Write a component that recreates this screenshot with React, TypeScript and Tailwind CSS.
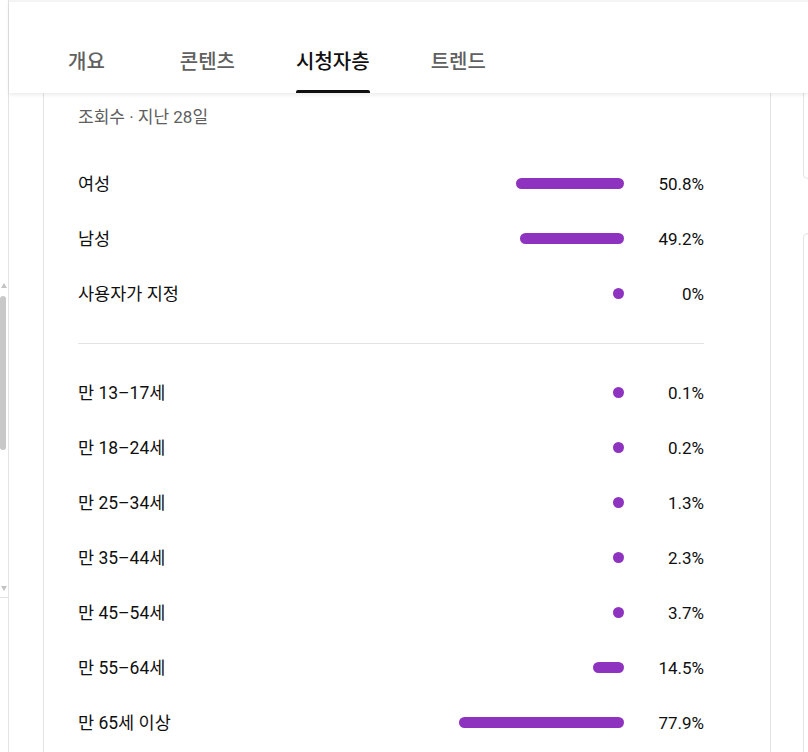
const tabs = [
  { label: '개요', gap: 'mr-[75px]', active: false },
  { label: '콘텐츠', gap: 'mr-[61px]', active: false },
  { label: '시청자층', gap: 'mr-[61px]', active: true },
  { label: '트렌드', gap: '', active: false },
];

const gender = [
  { label: '여성', pct: 50.8 },
  { label: '남성', pct: 49.2 },
  { label: '사용자가 지정', pct: 0 },
];

const ages = [
  { label: '만 13–17세', pct: 0.1 },
  { label: '만 18–24세', pct: 0.2 },
  { label: '만 25–34세', pct: 1.3 },
  { label: '만 35–44세', pct: 2.3 },
  { label: '만 45–54세', pct: 3.7 },
  { label: '만 55–64세', pct: 14.5 },
  { label: '만 65세 이상', pct: 77.9 },
];

const font = { fontFamily: 'Roboto, "Noto Sans CJK KR", sans-serif' };

function Row({ label, pct }: { label: string; pct: number }) {
  // bar grows from the right edge, never smaller than a dot
  const w = Math.max(11, pct * 2.12);
  return (
    <div className="h-[55px] flex items-center">
      <div className="flex-1 text-[17.5px] leading-[24px] text-[#0f0f0f]">{label}</div>
      <div className="h-[11px] rounded-full bg-[#8e33bf]" style={{ width: w }} />
      <div className="w-[80px] text-right text-[17px] leading-[24px] text-[#0f0f0f]">{pct === 0 ? '0' : pct.toFixed(1)}%</div>
    </div>
  );
}

export default function App() {
  return (
    <div className="w-[808px] h-[752px] overflow-hidden bg-white flex" style={font}>
      {/* left scrollbar strip */}
      <div className="w-[9px] shrink-0 border-r border-[#e3e3e3] flex flex-col">
        <div className="h-[283px]" />
        <div className="w-0 h-0 border-l-[3px] border-r-[3px] border-b-[5px] border-l-transparent border-r-transparent border-b-[#c4c4c4] ml-[1px]" />
        <div className="h-[8px]" />
        <div className="w-[6px] h-[154px] rounded-[3px] bg-[#c8c8c8]" />
        <div className="h-[136px]" />
        <div className="w-0 h-0 border-l-[3px] border-r-[3px] border-t-[5px] border-l-transparent border-r-transparent border-t-[#c4c4c4] ml-[1px]" />
        <div className="h-[7px] border-b border-[#e3e3e3]" />
      </div>

      <div className="flex-1 flex flex-col min-w-0">
        {/* tabs header */}
        <div className="h-[93px] shrink-0 bg-white border-t-[2px] border-[#f4f4f4] shadow-[0_2px_4px_rgba(0,0,0,0.08)] relative z-10 flex items-end pl-[59px]">
          {tabs.map(t => (
            <div key={t.label} className={`${t.gap} flex flex-col items-stretch`}>
              <div
                className={`text-[20px] font-medium leading-[26px] pb-[15px] ${t.active ? 'text-[#0f0f0f]' : 'text-[#606060]'}`}
              >
                {t.label}
              </div>
              <div className={`h-[3px] rounded-t-[2px] ${t.active ? 'bg-[#0f0f0f]' : 'bg-transparent'}`} />
            </div>
          ))}
        </div>

        <div className="flex-1 flex min-h-0">
          {/* audience card */}
          <div className="ml-[34px] w-[728px] shrink-0 border-x border-[#e3e3e3] pl-[34px] pr-[66px]">
            <div className="h-[63px] pt-[12px] text-[17px] leading-[24px] text-[#606060]">조회수 · 지난 28일</div>
            {gender.map(r => (
              <Row key={r.label} {...r} />
            ))}
            <div className="mt-[22px] mb-[21px] border-t border-[#e3e3e3]" />
            {ages.map(r => (
              <Row key={r.label} {...r} />
            ))}
          </div>

          {/* next column edges */}
          <div className="flex-1 flex flex-col pl-[32px]">
            <div className="h-[86px] border-l border-b border-[#e3e3e3] rounded-bl-[12px]" />
            <div className="h-[54px]" />
            <div className="flex-1 border-l border-t border-[#e3e3e3] rounded-tl-[12px]" />
          </div>
        </div>
      </div>
    </div>
  );
}
